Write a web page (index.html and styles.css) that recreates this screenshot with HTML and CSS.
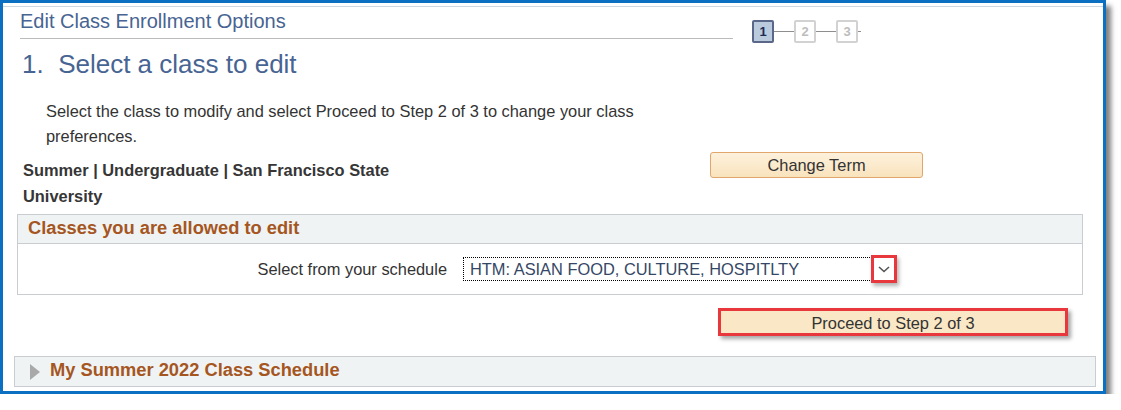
FILE: index.html
```html
<!DOCTYPE html>
<html lang="en">
<head>
    <meta charset="UTF-8">
    <meta name="viewport" content="width=device-width, initial-scale=1.0">
    <title>Edit Class Enrollment Options</title>
    <link rel="stylesheet" href="styles.css">
</head>
<body>
    <div class="frame">
        <div class="page">
            <!-- Page title and step tracker -->
            <div class="header-row">
                <h1 class="page-title">Edit Class Enrollment Options</h1>
                <div class="steps">
                    <span class="step current">1</span>
                    <span class="step-line"></span>
                    <span class="step">2</span>
                    <span class="step-line"></span>
                    <span class="step">3</span>
                    <span class="step-tail"></span>
                </div>
            </div>

            <h2 class="step-heading">1.&nbsp; Select a class to edit</h2>

            <p class="instructions">Select the class to modify and select Proceed to Step 2 of 3 to change your class preferences.</p>

            <div class="term-row">
                <div class="term-info">Summer | Undergraduate | San Francisco State University</div>
                <button type="button" class="term-button">Change Term</button>
            </div>

            <!-- Classes box -->
            <div class="group-box">
                <div class="group-header">Classes you are allowed to edit</div>
                <div class="group-body">
                    <label class="select-label" for="classSelect">Select from your schedule</label>
                    <div class="select-box" id="classSelect">
                        <span class="select-value">HTM: ASIAN FOOD, CULTURE, HOSPITLTY</span>
                        <span class="select-arrow">
                            <svg width="12" height="7" viewBox="0 0 12 7">
                                <path d="M1 1 L6 5.5 L11 1" fill="none" stroke="#555" stroke-width="1.6"/>
                            </svg>
                        </span>
                    </div>
                </div>
            </div>

            <div class="actions">
                <button type="button" class="proceed-button">Proceed to Step 2 of 3</button>
            </div>

            <!-- Collapsed schedule section -->
            <div class="collapsed-section">
                <span class="expand-arrow"></span>
                <span class="collapsed-title">My Summer 2022 Class Schedule</span>
            </div>
        </div>
    </div>
</body>
</html>
```

FILE: styles.css
```css
body {
    margin: 0;
    background-color: #ffffff;
    font-family: "Liberation Sans", Arial, sans-serif;
    color: #333333;
}

.frame {
    width: 1100px;
    height: 385px;
    border: 3px solid #0b6fc2;
    box-shadow: 5px 6px 5px rgba(0, 0, 0, 0.5);
    padding-top: 3px;
    box-sizing: content-box;
}

.page {
    border-top: 1px solid #cdd8e2;
    padding-left: 11px;
}

.header-row {
    display: flex;
    align-items: flex-start;
}

.page-title {
    width: 713px;
    margin: 0 0 0 6px;
    padding: 2px 0 5px 0;
    font-size: 20px;
    font-weight: normal;
    line-height: 24px;
    color: #476492;
    border-bottom: 1px solid #bbbbbb;
}

.steps {
    display: flex;
    align-items: center;
    margin: 13px 0 0 19px;
}

.step {
    width: 22px;
    height: 23px;
    box-sizing: border-box;
    border: 2px solid #d2d2d2;
    border-radius: 2px;
    background-color: #ffffff;
    color: #bdbdbd;
    font-size: 13px;
    font-weight: bold;
    line-height: 19px;
    text-align: center;
}

.step.current {
    background-color: #b9cbdc;
    border-color: #5a6789;
    color: #1f2c55;
}

.step-line {
    width: 20px;
    height: 1px;
    background-color: #8e8e8e;
}

.step-tail {
    width: 3px;
    height: 1px;
    background-color: #8e8e8e;
}

.step-heading {
    margin: 6px 0 0 8px;
    font-size: 26px;
    font-weight: normal;
    line-height: 30px;
    color: #476492;
}

.instructions {
    width: 610px;
    margin: 20px 0 0 32px;
    font-size: 16.4px;
    line-height: 25px;
}

.term-row {
    display: grid;
    grid-template-columns: 687px 213px;
    margin: 3px 0 0 9px;
}

.term-info {
    width: 420px;
    padding-top: 5px;
    font-size: 16.4px;
    font-weight: bold;
    line-height: 26px;
    color: #363636;
}

.term-button {
    height: 26px;
    padding: 0;
    border: 1px solid #e0a66c;
    border-radius: 3px;
    background: linear-gradient(#fdf1dc, #f9e3bd);
    font-family: inherit;
    font-size: 16.4px;
    line-height: 24px;
    color: #333333;
}

.group-box {
    width: 1066px;
    box-sizing: border-box;
    margin: 5px 0 0 3px;
    border: 1px solid #c9cdd2;
}

.group-header {
    padding: 0 0 3px 10px;
    background-color: #eff3f4;
    border-bottom: 1px solid #c9cdd2;
    font-size: 18.3px;
    font-weight: bold;
    line-height: 25px;
    color: #a5561f;
}

.group-body {
    display: flex;
    align-items: center;
    padding: 13px 0 13px 0;
}

.select-label {
    width: 429px;
    text-align: right;
    font-size: 16.4px;
    line-height: 24px;
}

.select-box {
    position: relative;
    width: 433px;
    height: 24px;
    box-sizing: border-box;
    margin-left: 16px;
    border: 1px dotted #000000;
    padding-left: 6px;
}

.select-value {
    font-size: 16.4px;
    line-height: 22px;
    color: #354766;
}

.select-arrow {
    position: absolute;
    left: 407px;
    top: -3px;
    width: 26px;
    height: 28px;
    box-sizing: border-box;
    border: 3px solid #e8383d;
    background-color: #ffffff;
    box-shadow: 2px 3px 4px rgba(0, 0, 0, 0.3);
    display: flex;
    align-items: center;
    justify-content: center;
}

.actions {
    display: flex;
    justify-content: flex-end;
    width: 1054px;
    margin-top: 13px;
}

.proceed-button {
    width: 350px;
    height: 28px;
    padding: 2px 0 0 0;
    border: 3px solid #e8383d;
    background-color: #f9e7c5;
    box-shadow: 3px 3px 4px rgba(0, 0, 0, 0.35);
    font-family: inherit;
    font-size: 16.4px;
    line-height: 20px;
    color: #333333;
}

.collapsed-section {
    display: flex;
    align-items: center;
    width: 1082px;
    height: 31px;
    box-sizing: border-box;
    margin-top: 20px;
    border: 1px solid #c9cdd2;
    background-color: #f0f3f4;
    padding-left: 15px;
}

.expand-arrow {
    width: 0;
    height: 0;
    border-left: 10px solid #a9a9a9;
    border-top: 8px solid transparent;
    border-bottom: 8px solid transparent;
    margin-right: 10px;
}

.collapsed-title {
    font-size: 18.3px;
    font-weight: bold;
    line-height: 26px;
    padding-bottom: 3px;
    color: #a5561f;
}
```
